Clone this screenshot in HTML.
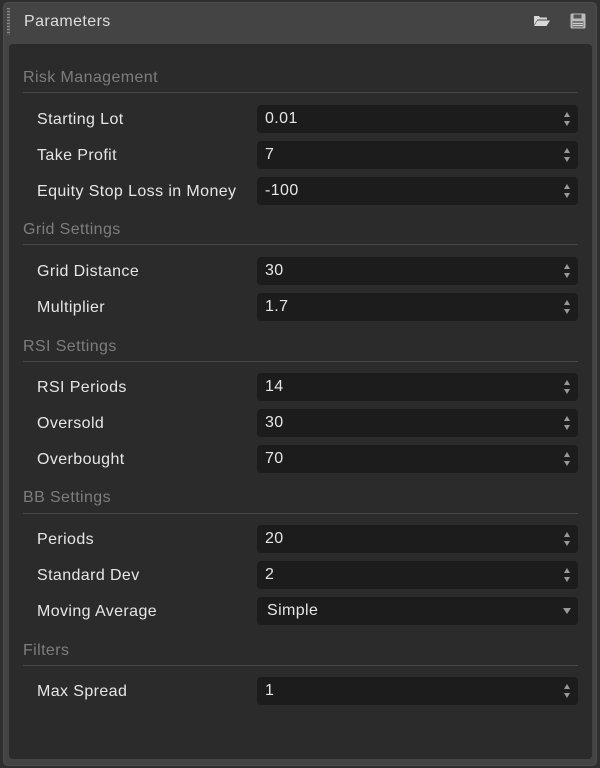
<!DOCTYPE html>
<html><head><style>
*{margin:0;padding:0;box-sizing:border-box}
body{width:600px;height:768px;background:#2f2f2f;font-family:"Liberation Sans",Arial,sans-serif;position:relative;overflow:hidden;letter-spacing:0.4px}
.outer{position:absolute;left:3px;top:2px;width:594px;height:764px;background:#444;border-radius:5px;border:1px solid #4c4c4c}
.grip{position:absolute;left:7px;top:8px;width:3px;height:27px;background:repeating-linear-gradient(#8a8a8a 0 1px,#555 1px 3px)}
.title{position:absolute;left:24px;top:13px;font-size:16px;color:#ddd}
.inner{position:absolute;left:9px;top:44px;width:583px;height:715px;background:#2b2b2b;border-radius:4px}
.sec{position:absolute;left:23px;font-size:16px;color:#7d7d7d}
.line{position:absolute;left:23px;width:555px;height:1px;background:#474747}
.lab{position:absolute;left:37px;font-size:16px;color:#e6e6e6}
.box{position:absolute;left:257px;width:321px;height:28px;background:#1c1c1c;border-radius:4px;color:#e6e6e6;font-size:16px;padding:5px 0 0 8px}
.sp{position:absolute;right:7px;top:7px;width:7px;height:14px}
.sp:before{content:"";position:absolute;left:0;top:0;border-left:3.5px solid transparent;border-right:3.5px solid transparent;border-bottom:5px solid #999}
.sp:after{content:"";position:absolute;left:0;bottom:0;border-left:3.5px solid transparent;border-right:3.5px solid transparent;border-top:5px solid #999}
.dd{position:absolute;right:7px;top:11px;border-left:4px solid transparent;border-right:4px solid transparent;border-top:6px solid #999}
</style></head><body>
<div class="outer"></div>
<div class="grip"></div>
<div class="title">Parameters</div>
<svg style="position:absolute;left:533px;top:14px" width="18" height="14" viewBox="0 0 18 14"><path d="M1 2h5l1 1.5h7v2H4.5L1 11z" fill="#d8d8d8"/><path d="M4.5 6.5H17L13.5 12H1z" fill="#d8d8d8"/></svg>
<svg style="position:absolute;left:570px;top:13px" width="16" height="16" viewBox="0 0 16 16"><rect x="0.5" y="0.5" width="15" height="15" rx="1.5" fill="#bbb"/><rect x="3.5" y="1.5" width="8" height="4" fill="#555"/><rect x="2.5" y="8" width="11" height="6.5" fill="#777"/><rect x="3" y="10" width="10" height="1" fill="#ccc"/><rect x="3" y="12" width="10" height="1" fill="#ccc"/></svg>
<div class="inner"></div>

<div class="sec" style="top:69px">Risk Management</div><div class="line" style="top:92px"></div>
<div class="lab" style="top:111px">Starting Lot</div><div class="box" style="top:105px">0.01<i class="sp"></i></div>
<div class="lab" style="top:147px">Take Profit</div><div class="box" style="top:141px">7<i class="sp"></i></div>
<div class="lab" style="top:183px">Equity Stop Loss in Money</div><div class="box" style="top:177px">-100<i class="sp"></i></div>

<div class="sec" style="top:221px">Grid Settings</div><div class="line" style="top:244px"></div>
<div class="lab" style="top:263px">Grid Distance</div><div class="box" style="top:257px">30<i class="sp"></i></div>
<div class="lab" style="top:299px">Multiplier</div><div class="box" style="top:293px">1.7<i class="sp"></i></div>

<div class="sec" style="top:338px">RSI Settings</div><div class="line" style="top:361px"></div>
<div class="lab" style="top:379px">RSI Periods</div><div class="box" style="top:373px">14<i class="sp"></i></div>
<div class="lab" style="top:415px">Oversold</div><div class="box" style="top:409px">30<i class="sp"></i></div>
<div class="lab" style="top:451px">Overbought</div><div class="box" style="top:445px">70<i class="sp"></i></div>

<div class="sec" style="top:489px">BB Settings</div><div class="line" style="top:513px"></div>
<div class="lab" style="top:531px">Periods</div><div class="box" style="top:525px">20<i class="sp"></i></div>
<div class="lab" style="top:567px">Standard Dev</div><div class="box" style="top:561px">2<i class="sp"></i></div>
<div class="lab" style="top:603px">Moving Average</div><div class="box" style="top:597px;padding-left:10px">Simple<i class="dd"></i></div>

<div class="sec" style="top:642px">Filters</div><div class="line" style="top:665px"></div>
<div class="lab" style="top:683px">Max Spread</div><div class="box" style="top:677px">1<i class="sp"></i></div>
</body></html>
